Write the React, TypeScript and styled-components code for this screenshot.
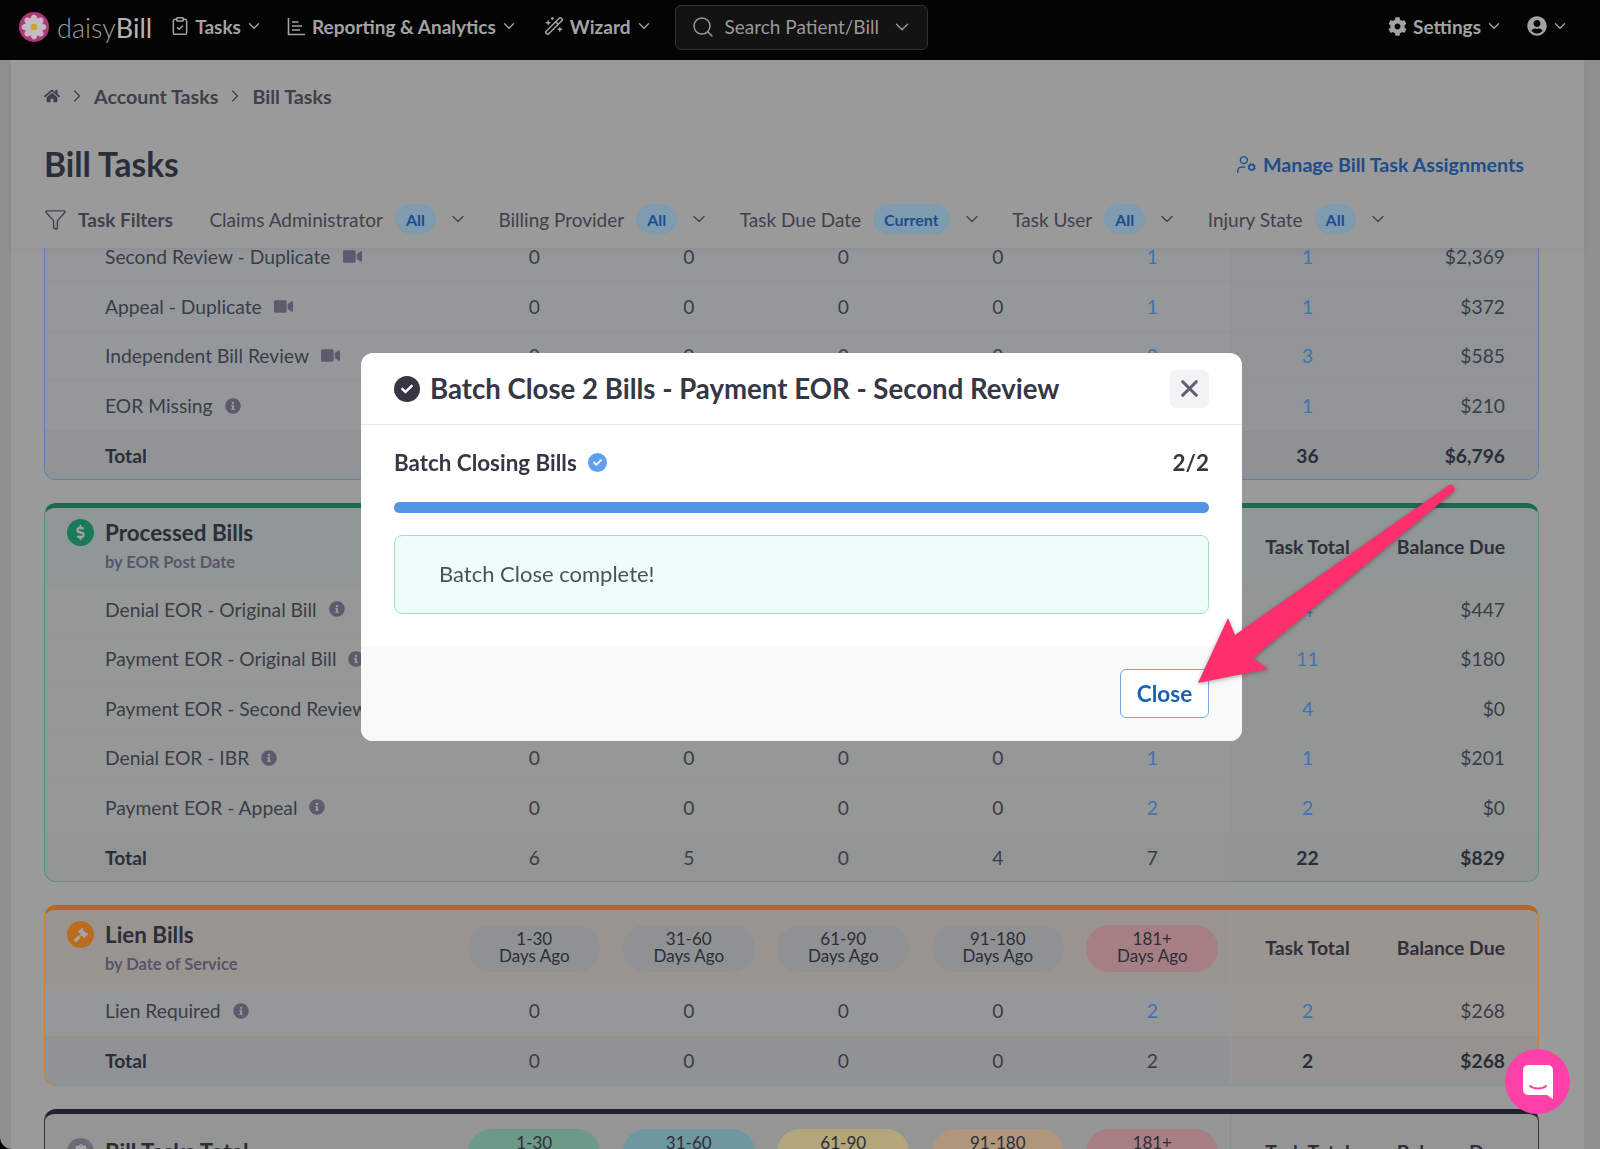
import React from "react";
import styled, { createGlobalStyle } from "styled-components";
import { ChevronDown, ChevronRight, ClipboardCheck, Filter, Search, UserCog, WandSparkles, X } from "lucide-react";
import { FaCheck, FaClipboardList, FaCog, FaDollarSign, FaGavel, FaHome, FaInfoCircle, FaUserCircle, FaVideo } from "react-icons/fa";

const Global = createGlobalStyle`
  html, body {
    margin: 0;
    height: 100%;
    overflow: hidden;
    background: #040404;
  }
  body {
    font-family: "Lato", "Liberation Sans", sans-serif;
    color: #3b3c48;
  }
`;

type Tone = "blue" | "green" | "orange" | "dark";

const tones = {
  blue: { top: "#5a80ae", edge: "#5a80ae", head: "#919699", row: "#95989a", total: "#919495", line: "#909394", side: "#919597", sideTotal: "#8e9294" },
  green: { top: "#1b6a51", edge: "#55907e", head: "#919696", row: "#959897", total: "#929594", line: "#8f9694", side: "#929796", sideTotal: "#909594" },
  orange: { top: "#b3691f", edge: "#c08440", head: "#9a9490", row: "#969798", total: "#919293", line: "#a0978f", side: "#9a9692", sideTotal: "#959390" },
  dark: { top: "#21222e", edge: "#33343e", head: "#959596", row: "#979797", total: "#8f8f8f", line: "#8c8c8e", side: "#939394", sideTotal: "#8e8e8f" },
};

type Row = { label: string; icon?: "video" | "info"; cells: (string | number)[]; links?: number[] };

const firstRows: Row[] = [
  { label: "Second Review - Duplicate", icon: "video", cells: [0, 0, 0, 0, 1, 1, "$2,369"], links: [4, 5] },
  { label: "Appeal - Duplicate", icon: "video", cells: [0, 0, 0, 0, 1, 1, "$372"], links: [4, 5] },
  { label: "Independent Bill Review", icon: "video", cells: [0, 0, 0, 0, 2, 3, "$585"], links: [4, 5] },
  { label: "EOR Missing", icon: "info", cells: [0, 0, 0, 0, 1, 1, "$210"], links: [4, 5] },
];

const processedRows: Row[] = [
  { label: "Denial EOR - Original Bill", icon: "info", cells: [0, 0, 0, 0, 1, 4, "$447"], links: [4, 5] },
  { label: "Payment EOR - Original Bill", icon: "info", cells: [2, 1, 0, 3, 2, 11, "$180"], links: [4, 5] },
  { label: "Payment EOR - Second Review", icon: "info", cells: [4, 0, 0, 0, 0, 4, "$0"], links: [4, 5] },
  { label: "Denial EOR - IBR", icon: "info", cells: [0, 0, 0, 0, 1, 1, "$201"], links: [4, 5] },
  { label: "Payment EOR - Appeal", icon: "info", cells: [0, 0, 0, 0, 2, 2, "$0"], links: [4, 5] },
];

const lienRows: Row[] = [
  { label: "Lien Required", icon: "info", cells: [0, 0, 0, 0, 2, 2, "$268"], links: [4, 5] },
];

const buckets = ["1-30", "31-60", "61-90", "91-180", "181+"];
const plainPills = ["#8f9193", "#8f9193", "#8f9193", "#8f9193", "#a67f85"];
const totalPills = ["#6d9a88", "#6f97a0", "#b3a67a", "#b0967a", "#a67f85"];

function DataRows({ rows, tone }: { rows: Row[]; tone: Tone }) {
  return (
    <>
      {rows.map((row) => (
        <RowGrid key={row.label} $tone={tone}>
          <RowLabel>
            {row.label}
            {row.icon === "video" ? <FaVideo size={19} /> : <FaInfoCircle size={16} />}
          </RowLabel>
          {row.cells.map((value, i) => (
            <Cell key={i} $link={row.links?.includes(i)} $col={i} $tone={tone}>
              {value}
            </Cell>
          ))}
        </RowGrid>
      ))}
    </>
  );
}

function TotalRow({ cells, tone }: { cells: (string | number)[]; tone: Tone }) {
  return (
    <RowGrid $tone={tone} $total>
      <RowLabel $total>Total</RowLabel>
      {cells.map((value, i) => (
        <Cell key={i} $col={i} $tone={tone} $total>
          {value}
        </Cell>
      ))}
    </RowGrid>
  );
}

function CardHead({ title, sub, icon, color, pills, tone }: { title: string; sub?: string; icon: React.ReactNode; color: string; pills: string[]; tone: Tone }) {
  return (
    <HeadGrid $tone={tone}>
      <HeadTitle $solo={!sub}>
        <HeadIcon $color={color}>{icon}</HeadIcon>
        <div>
          <CardTitle>{title}</CardTitle>
          {sub && <CardSub>{sub}</CardSub>}
        </div>
      </HeadTitle>
      {buckets.map((b, i) => (
        <PillSlot key={b}>
          <DayPill $bg={pills[i]}>
            {b}
            <br />
            Days Ago
          </DayPill>
        </PillSlot>
      ))}
      <HeadCell $tone={tone}>Task Total</HeadCell>
      <HeadCell $tone={tone} $right>Balance Due</HeadCell>
    </HeadGrid>
  );
}

function FilterItem({ label, value }: { label: string; value: string }) {
  return (
    <FilterGroup>
      {label}
      <FilterPill>{value}</FilterPill>
      <ChevronDown size={20} strokeWidth={1.6} />
    </FilterGroup>
  );
}

export default function App() {
  return (
    <>
      <Global />
      <Shell>
        <NavBar>
          <Logo>
            <svg width="30" height="30" viewBox="0 0 30 30">
              <circle cx="15" cy="15" r="15" fill="#b2367c" />
              {[0, 45, 90, 135, 180, 225, 270, 315].map((a) => (
                <ellipse key={a} cx="15" cy="8" rx="3.6" ry="5.4" fill="#c4bcc2" transform={`rotate(${a} 15 15)`} />
              ))}
              <circle cx="15" cy="15" r="3.2" fill="#c9a227" />
            </svg>
            <LogoText>
              daisy<b>Bill</b>
            </LogoText>
          </Logo>
          <NavItem>
            <TasksIcon />
            Tasks
            <NavCaret />
          </NavItem>
          <NavItem>
            <svg width="19" height="19" viewBox="0 0 19 19" fill="none" stroke="currentColor" strokeWidth="1.6">
              <path d="M1.5 1v16.5H18M5 5h6.5M5 9h10M5 13h8" />
            </svg>
            Reporting &amp; Analytics
            <NavCaret />
          </NavItem>
          <NavItem>
            <WizardIcon />
            Wizard
            <NavCaret />
          </NavItem>
          <SearchBox>
            <Search size={24} strokeWidth={1.5} />
            <span>Search Patient/Bill</span>
            <ChevronDown size={22} strokeWidth={1.6} />
          </SearchBox>
          <NavRight>
            <NavItem>
              <FaCog size={19} />
              Settings
              <NavCaret />
            </NavItem>
            <NavItem>
              <FaUserCircle size={20} />
              <NavCaret />
            </NavItem>
          </NavRight>
        </NavBar>
        <Body>
          <Gutter $w={11} />
          <Content>
            <TopPanel>
              <Crumbs>
                <FaHome size={16} />
                <ChevronRight size={20} strokeWidth={1.5} />
                <span>Account Tasks</span>
                <ChevronRight size={20} strokeWidth={1.5} />
                <span>Bill Tasks</span>
              </Crumbs>
              <TitleRow>
                <PageTitle>Bill Tasks</PageTitle>
                <ManageLink>
                  <UserCog size={21} strokeWidth={1.6} />
                  Manage Bill Task Assignments
                </ManageLink>
              </TitleRow>
              <Filters>
                <FilterHead>
                  <Filter size={23} strokeWidth={1.5} />
                  Task Filters
                </FilterHead>
                <FilterItem label="Claims Administrator" value="All" />
                <FilterItem label="Billing Provider" value="All" />
                <FilterItem label="Task Due Date" value="Current" />
                <FilterItem label="Task User" value="All" />
                <FilterItem label="Injury State" value="All" />
              </Filters>
            </TopPanel>
            <Scroller>
              <Card $tone="blue" $cut>
                <DataRows rows={firstRows} tone="blue" />
                <TotalRow cells={[4, 6, 2, 3, 9, 36, "$6,796"]} tone="blue" />
              </Card>
              <Card $tone="green">
                <CardHead title="Processed Bills" sub="by EOR Post Date" icon={<FaDollarSign size={15} />} color="#1b7a5a" pills={plainPills} tone="green" />
                <DataRows rows={processedRows} tone="green" />
                <TotalRow cells={[6, 5, 0, 4, 7, 22, "$829"]} tone="green" />
              </Card>
              <Card $tone="orange">
                <CardHead title="Lien Bills" sub="by Date of Service" icon={<FaGavel size={14} />} color="#b96c20" pills={plainPills} tone="orange" />
                <DataRows rows={lienRows} tone="orange" />
                <TotalRow cells={[0, 0, 0, 0, 2, 2, "$268"]} tone="orange" />
              </Card>
              <Card $tone="dark">
                <CardHead title="Bill Tasks Total" icon={<FaClipboardList size={14} />} color="#6b6c78" pills={totalPills} tone="dark" />
              </Card>
            </Scroller>
          </Content>
          <Gutter $w={16} />
        </Body>
      </Shell>

      <Modal>
        <ModalHead>
          <ModalTitle>
            <DoneIcon $size={26} $bg="#353744">
              <FaCheck size={12} />
            </DoneIcon>
            Batch Close 2 Bills - Payment EOR - Second Review
          </ModalTitle>
          <CloseX>
            <X size={27} strokeWidth={2.8} />
          </CloseX>
        </ModalHead>
        <ModalBody>
          <ProgressHead>
            <ProgressName>
              Batch Closing Bills
              <DoneIcon $size={19} $bg="#5f9fee">
                <FaCheck size={9} />
              </DoneIcon>
            </ProgressName>
            <span>2/2</span>
          </ProgressHead>
          <ProgressBar />
          <Success>Batch Close complete!</Success>
        </ModalBody>
        <ModalFoot>
          <CloseButton>Close</CloseButton>
        </ModalFoot>
      </Modal>

      <ArrowLayer viewBox="0 0 1600 1149">
        <path
          d="M1198 683 L1228 618 L1235 635 L1448 486 Q1452 483 1454 487 Q1456 490 1452 493 L1253 658 L1268 669 Z"
          fill="#ff2e6c"
        />
      </ArrowLayer>

      <Launcher>
        <svg width="30" height="34" viewBox="0 0 30 34">
          <path d="M5 0h20a5 5 0 0 1 5 5v29l-6-4H5a5 5 0 0 1-5-5V5a5 5 0 0 1 5-5z" fill="#fff" />
          <path d="M7 21c4 3.4 12 3.4 16 0" stroke="#ff40a8" strokeWidth="2" fill="none" strokeLinecap="round" />
        </svg>
      </Launcher>
    </>
  );
}

const Shell = styled.div`
  height: 100vh;
  display: flex;
  flex-direction: column;
`;

const NavBar = styled.header`
  height: 60px;
  flex: none;
  display: flex;
  align-items: center;
  padding: 0 31px 6px 19px;
  background: #040404;
  color: #a3a3a3;
  box-sizing: border-box;
`;

const Logo = styled.div`
  display: flex;
  align-items: center;
  gap: 8px;
  margin-right: 20px;
`;

const LogoText = styled.span`
  font-size: 27px;
  font-weight: 300;
  color: #9b9b9b;
  b {
    font-weight: 400;
    color: #b5b5b5;
  }
`;

const NavItem = styled.div`
  display: flex;
  align-items: center;
  gap: 6px;
  margin-right: 24px;
  padding-bottom: 2px;
  font-size: 19px;
  font-weight: 700;
  white-space: nowrap;
  &:last-child {
    margin-right: 0;
  }
`;

const NavCaret = styled(ChevronDown).attrs({ size: 18, strokeWidth: 1.8 })`
  margin-left: -2px;
`;

const TasksIcon = styled(ClipboardCheck).attrs({ size: 20, strokeWidth: 1.8 })`
  margin: 0 -1px 0 -2px;
`;

const WizardIcon = styled(WandSparkles).attrs({ size: 20, strokeWidth: 1.8 })`
  margin-left: 2px;
`;

const SearchBox = styled.div`
  width: 253px;
  height: 45px;
  margin-left: -2px;
  box-sizing: border-box;
  display: flex;
  align-items: center;
  padding: 0 14px 0 15px;
  gap: 10px;
  background: #131313;
  border: 1px solid #303030;
  border-radius: 6px;
  font-size: 19px;
  color: #999;
  white-space: nowrap;
  span {
    flex: 1;
    padding-bottom: 2px;
  }
`;

const NavRight = styled.div`
  margin-left: auto;
  display: flex;
  align-items: center;
`;

const Body = styled.div`
  flex: 1;
  min-height: 0;
  display: flex;
  background: #8f8f8f;
  border-bottom-left-radius: 12px;
  overflow: hidden;
`;

const Gutter = styled.div<{ $w: number }>`
  width: ${(p) => p.$w}px;
  flex: none;
`;

const Content = styled.main`
  flex: 1;
  min-width: 0;
  display: flex;
  flex-direction: column;
  background: #9a9a9a;
`;

const TopPanel = styled.div`
  height: 188px;
  flex: none;
  position: relative;
  z-index: 1;
  padding: 0 60px 0 33px;
  box-shadow: 0 2px 6px rgba(0, 0, 0, 0.06);
  background: #9a9a9a;
`;

const Crumbs = styled.nav`
  height: 72px;
  display: flex;
  align-items: center;
  gap: 7px;
  font-size: 19.7px;
  font-weight: 700;
  color: #3f404c;
`;

const TitleRow = styled.div`
  height: 64px;
  display: flex;
  align-items: center;
  justify-content: space-between;
  padding-bottom: 1px;
  box-sizing: border-box;
`;

const PageTitle = styled.h1`
  margin: 0;
  font-size: 33.5px;
  font-weight: 700;
  color: #2c2d38;
`;

const ManageLink = styled.a`
  display: flex;
  align-items: center;
  gap: 6px;
  margin-top: 1px;
  font-size: 19.7px;
  font-weight: 700;
  color: #1c4e8c;
`;

const Filters = styled.div`
  height: 46px;
  display: flex;
  align-items: center;
  gap: 30.5px;
  font-size: 19px;
  color: #40414d;
`;

const FilterHead = styled.div`
  display: flex;
  align-items: center;
  gap: 11px;
  margin-right: 6px;
  font-weight: 700;
`;

const FilterGroup = styled.div`
  display: flex;
  align-items: center;
  gap: 12px;
`;

const FilterPill = styled.span`
  height: 30px;
  padding: 0 11px;
  display: flex;
  align-items: center;
  border-radius: 15px;
  background: #7e9bb0;
  color: #1c4e8c;
  font-size: 16px;
  font-weight: 700;
`;

const Scroller = styled.div`
  flex: 1;
  min-height: 0;
  overflow: hidden;
  padding: 0 45px 0 33px;
  display: flex;
  flex-direction: column;
  gap: 22.8px;
`;

const Card = styled.section<{ $tone: Tone; $cut?: boolean }>`
  flex: none;
  overflow: hidden;
  background: ${(p) => tones[p.$tone].row};
  border: 1px solid ${(p) => tones[p.$tone].edge};
  border-top: 5px solid ${(p) => tones[p.$tone].top};
  border-radius: 12px;
  ${(p) =>
    p.$cut &&
    `
    margin-top: -16.5px;
    border-top: none;
    border-radius: 0 0 12px 12px;
  `}
`;

const COLUMNS = "412px repeat(5, 154.5px) 155px 1fr";

const RowGrid = styled.div<{ $tone: Tone; $total?: boolean }>`
  display: grid;
  grid-template-columns: ${COLUMNS};
  height: 49.6px;
  box-sizing: border-box;
  align-items: stretch;
  font-size: 19.25px;
  color: #3b3c48;
  background: ${(p) => (p.$total ? tones[p.$tone].total : tones[p.$tone].row)};
  border-top: 1px solid ${(p) => tones[p.$tone].line};
`;

const RowLabel = styled.div<{ $total?: boolean }>`
  display: flex;
  align-items: center;
  gap: 12px;
  padding-left: 60px;
  white-space: nowrap;
  font-weight: ${(p) => (p.$total ? 700 : 400)};
  color: ${(p) => (p.$total ? "#2c2d38" : "#3b3c48")};
  svg {
    color: #5a5b6c;
  }
`;

const Cell = styled.div<{ $link?: boolean; $col: number; $tone: Tone; $total?: boolean }>`
  display: flex;
  align-items: center;
  justify-content: ${(p) => (p.$col === 6 ? "flex-end" : "center")};
  padding-right: ${(p) => (p.$col === 6 ? "33px" : "0")};
  color: ${(p) => (p.$link ? "#3f72b0" : p.$total && p.$col > 4 ? "#2c2d38" : "#3b3c48")};
  font-weight: ${(p) => (p.$total && p.$col > 4 ? 700 : 400)};
  background: ${(p) => (p.$col > 4 ? (p.$total ? tones[p.$tone].sideTotal : tones[p.$tone].side) : "transparent")};
  border-left: ${(p) => (p.$col === 5 ? `1px solid ${tones[p.$tone].line}` : "none")};
`;

const HeadGrid = styled.div<{ $tone: Tone }>`
  display: grid;
  grid-template-columns: ${COLUMNS};
  height: 75.5px;
  background: ${(p) => tones[p.$tone].head};
`;

const HeadTitle = styled.div<{ $solo?: boolean }>`
  display: flex;
  align-items: flex-start;
  gap: 11px;
  padding: ${(p) => (p.$solo ? 24 : 11)}px 0 0 22px;
`;

const HeadIcon = styled.span<{ $color: string }>`
  width: 27px;
  height: 27px;
  flex: none;
  border-radius: 50%;
  display: flex;
  align-items: center;
  justify-content: center;
  color: #a5a5a5;
  background: ${(p) => p.$color};
`;

const CardTitle = styled.div`
  font-size: 22.4px;
  font-weight: 700;
  line-height: 28px;
  color: #2c2d38;
`;

const CardSub = styled.div`
  margin-top: 5px;
  font-size: 16.4px;
  font-weight: 700;
  color: #555668;
`;

const PillSlot = styled.div`
  padding-top: 15px;
  display: flex;
  justify-content: center;
`;

const DayPill = styled.div<{ $bg: string }>`
  width: 132px;
  height: 47px;
  box-sizing: border-box;
  border-radius: 23px;
  padding-top: 5px;
  text-align: center;
  font-size: 17px;
  line-height: 17px;
  color: #2c2d38;
  background: ${(p) => p.$bg};
`;

const HeadCell = styled.div<{ $tone: Tone; $right?: boolean }>`
  display: flex;
  align-items: center;
  justify-content: ${(p) => (p.$right ? "flex-end" : "center")};
  padding-right: ${(p) => (p.$right ? "33px" : "0")};
  border-left: ${(p) => (p.$right ? "none" : `1px solid ${tones[p.$tone].line}`)};
  font-size: 19.4px;
  font-weight: 700;
  color: #2f303b;
`;

const Modal = styled.div`
  position: fixed;
  left: 361px;
  top: 353px;
  width: 881px;
  height: 388px;
  display: flex;
  flex-direction: column;
  background: #fff;
  border-radius: 12px;
  overflow: hidden;
  z-index: 5;
`;

const ModalHead = styled.div`
  height: 72px;
  flex: none;
  display: flex;
  align-items: center;
  justify-content: space-between;
  padding: 0 33px;
  border-bottom: 1px solid #e9e9e9;
  box-sizing: border-box;
`;

const ModalTitle = styled.h2`
  margin: 0;
  display: flex;
  align-items: center;
  gap: 10px;
  font-size: 27.6px;
  font-weight: 700;
  color: #353744;
`;

const DoneIcon = styled.span<{ $size: number; $bg: string }>`
  width: ${(p) => p.$size}px;
  height: ${(p) => p.$size}px;
  border-radius: 50%;
  display: inline-flex;
  align-items: center;
  justify-content: center;
  color: #fff;
  background: ${(p) => p.$bg};
`;

const CloseX = styled.button`
  width: 39px;
  height: 38px;
  padding: 0;
  border: none;
  border-radius: 6px;
  display: flex;
  align-items: center;
  justify-content: center;
  color: #5f6072;
  background: #f3f3f6;
`;

const ModalBody = styled.div`
  flex: 1;
  padding: 0 33px;
`;

const ProgressHead = styled.div`
  height: 77px;
  padding-bottom: 2px;
  box-sizing: border-box;
  display: flex;
  align-items: center;
  justify-content: space-between;
  font-size: 22.4px;
  font-weight: 700;
  color: #353744;
`;

const ProgressName = styled.div`
  display: flex;
  align-items: center;
  gap: 11px;
`;

const ProgressBar = styled.div`
  height: 11px;
  border-radius: 5.5px;
  background: #5295e3;
`;

const Success = styled.div`
  height: 79px;
  margin-top: 22px;
  box-sizing: border-box;
  padding: 0 0 2px 44px;
  display: flex;
  align-items: center;
  border: 1px solid #a6dcc8;
  border-radius: 8px;
  background: #edfefa;
  font-size: 22px;
  color: #4e4f5e;
`;

const ModalFoot = styled.div`
  height: 94px;
  flex: none;
  display: flex;
  justify-content: flex-end;
  align-items: flex-start;
  padding: 22px 33px 0 0;
  box-sizing: border-box;
  background: #f9f9f9;
`;

const CloseButton = styled.button`
  width: 89px;
  height: 49px;
  padding: 0;
  border: 1px solid #74a9ea;
  border-radius: 6px;
  background: #fff;
  color: #1a62b8;
  font-family: inherit;
  font-size: 22.5px;
  font-weight: 700;
`;

const ArrowLayer = styled.svg`
  position: fixed;
  inset: 0;
  width: 1600px;
  height: 1149px;
  z-index: 6;
  pointer-events: none;
  filter: drop-shadow(0 1px 2px rgba(0, 0, 0, 0.35));
`;

const Launcher = styled.div`
  position: fixed;
  right: 30px;
  top: 1049px;
  width: 65px;
  height: 65px;
  border-radius: 50%;
  display: flex;
  align-items: center;
  justify-content: center;
  background: #ff40a8;
  z-index: 7;
`;
